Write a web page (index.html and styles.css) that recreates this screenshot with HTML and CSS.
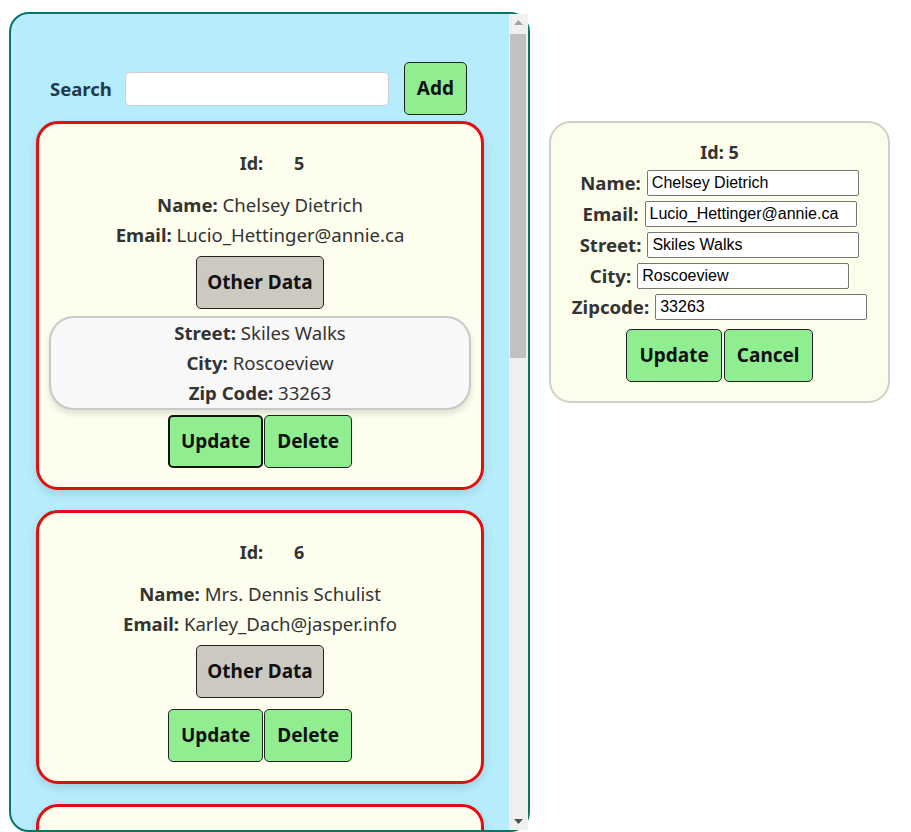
FILE: index.html
```html
<!DOCTYPE html>
<html lang="en">
<head>
    <meta charset="UTF-8">
    <meta name="viewport" content="width=device-width, initial-scale=1.0">
    <title>Users</title>
    <link rel="stylesheet" href="styles.css">
</head>
<body>

    <div class="page">
        <!-- Left: scrolling list of users -->
        <div class="list-panel">
            <div class="list-content">
                <div class="search-bar">
                    <label class="search-label" for="search">Search</label>
                    <input type="text" id="search" class="search-input">
                    <button class="btn btn-green">Add</button>
                </div>

                <div class="card">
                    <p class="card-id"><b>Id:</b><b class="id-value">5</b></p>
                    <p class="field"><b>Name:</b> Chelsey Dietrich</p>
                    <p class="field"><b>Email:</b> Lucio_Hettinger@annie.ca</p>
                    <button class="btn btn-grey">Other Data</button>
                    <div class="details">
                        <p><b>Street:</b> Skiles Walks</p>
                        <p><b>City:</b> Roscoeview</p>
                        <p><b>Zip Code:</b> 33263</p>
                    </div>
                    <div class="actions">
                        <button class="btn btn-green btn-focus">Update</button>
                        <button class="btn btn-green">Delete</button>
                    </div>
                </div>

                <div class="card">
                    <p class="card-id"><b>Id:</b><b class="id-value">6</b></p>
                    <p class="field"><b>Name:</b> Mrs. Dennis Schulist</p>
                    <p class="field"><b>Email:</b> Karley_Dach@jasper.info</p>
                    <button class="btn btn-grey">Other Data</button>
                    <div class="actions">
                        <button class="btn btn-green">Update</button>
                        <button class="btn btn-green">Delete</button>
                    </div>
                </div>

                <div class="card">
                    <p class="card-id"><b>Id:</b><b class="id-value">7</b></p>
                    <p class="field"><b>Name:</b> Kurtis Weissnat</p>
                    <p class="field"><b>Email:</b> Telly.Hoeger@billy.biz</p>
                    <button class="btn btn-grey">Other Data</button>
                    <div class="actions">
                        <button class="btn btn-green">Update</button>
                        <button class="btn btn-green">Delete</button>
                    </div>
                </div>
            </div>

            <!-- drawn scrollbar -->
            <div class="scrollbar">
                <div class="scroll-btn">
                    <svg width="9" height="5" viewBox="0 0 9 5"><polygon points="0,5 4.5,0 9,5" fill="#a3a3a3"/></svg>
                </div>
                <div class="scroll-track">
                    <div class="scroll-thumb"></div>
                </div>
                <div class="scroll-btn">
                    <svg width="9" height="5" viewBox="0 0 9 5"><polygon points="0,0 4.5,5 9,0" fill="#505050"/></svg>
                </div>
            </div>
        </div>

        <!-- Right: edit form for the selected user -->
        <div class="edit-panel">
            <p class="edit-id">Id: 5</p>
            <div class="edit-row">
                <label for="editName">Name:</label>
                <input type="text" id="editName" class="edit-input" value="Chelsey Dietrich">
            </div>
            <div class="edit-row">
                <label for="editEmail">Email:</label>
                <input type="text" id="editEmail" class="edit-input" value="Lucio_Hettinger@annie.ca">
            </div>
            <div class="edit-row">
                <label for="editStreet">Street:</label>
                <input type="text" id="editStreet" class="edit-input" value="Skiles Walks">
            </div>
            <div class="edit-row">
                <label for="editCity">City:</label>
                <input type="text" id="editCity" class="edit-input" value="Roscoeview">
            </div>
            <div class="edit-row">
                <label for="editZip">Zipcode:</label>
                <input type="text" id="editZip" class="edit-input" value="33263">
            </div>
            <div class="actions edit-actions">
                <button class="btn btn-green">Update</button>
                <button class="btn btn-green">Cancel</button>
            </div>
        </div>
    </div>

</body>
</html>
```

FILE: styles.css
```css
body {
    margin: 0;
    font-family: "Noto Sans", "Open Sans", sans-serif;
    color: #333;
    background-color: #fff;
    overflow: hidden;
}

p {
    margin: 0;
}

.page {
    display: flex;
    align-items: flex-start;
    padding: 12px 0 0 9px;
}

/* ---------- left list ---------- */

.list-panel {
    display: flex;
    width: 521px;
    height: 820px;
    box-sizing: border-box;
    border: 2px solid #0b7563;
    border-radius: 20px;
    background-color: #b6ecfc;
}

.list-content {
    flex: 1;
    overflow: hidden;
    border-radius: 18px 0 0 18px;
}

.scrollbar {
    width: 19px;
    display: flex;
    flex-direction: column;
    background-color: #f0f0f0;
}

.scroll-btn {
    height: 17px;
    display: flex;
    align-items: center;
    justify-content: center;
}

.scroll-track {
    flex: 1;
    padding-top: 3px;
}

.scroll-thumb {
    height: 324px;
    margin: 0 2px 0 1px;
    background-color: #c1c1c1;
}

.search-bar {
    display: flex;
    align-items: center;
    justify-content: center;
    padding: 48px 3px 0 0;
    margin-bottom: 6px;
}

.search-label {
    font-size: 18.5px;
    font-weight: bold;
    color: #1f3a4d;
    margin-right: 13px;
}

.search-input {
    width: 264px;
    height: 34px;
    box-sizing: border-box;
    border: 1px solid #cfcfcf;
    border-radius: 5px;
    background-color: #fff;
    margin-right: 15px;
}

.btn {
    font-family: "Noto Sans", "Open Sans", sans-serif;
    font-size: 19px;
    font-weight: bold;
    line-height: 27px;
    color: #111;
    padding: 12px;
    border: 1px solid #222;
    border-radius: 5px;
    cursor: pointer;
}

.btn-green {
    background-color: #90ee90;
}

.btn-grey {
    background-color: #ccc9c1;
    padding: 12px 10px;
}

.btn-focus {
    border: 2px solid #111;
    padding: 11px;
}

.card {
    width: 90%;
    margin: 0 auto 20px;
    box-sizing: border-box;
    border: 3px solid #e01010;
    border-radius: 22px;
    background-color: #fefeee;
    box-shadow: 0 4px 8px rgba(0, 0, 0, 0.12);
    padding: 24px 0 19px;
    display: flex;
    flex-direction: column;
    align-items: center;
    font-size: 18.6px;
}

.card-id {
    font-size: 18px;
    line-height: 30px;
    margin-bottom: 12px;
    padding-left: 24px;
}

.id-value {
    margin-left: 31px;
}

.field {
    line-height: 30px;
}

.card .btn-grey {
    margin-top: 6px;
}

.details {
    align-self: stretch;
    margin: 7px 10px -6px;
    border: 2px solid #c9c9c9;
    border-radius: 25px;
    background-color: #f8f8f8;
    box-shadow: 0 4px 6px rgba(0, 0, 0, 0.12);
    text-align: center;
}

.details p {
    line-height: 30px;
}

.actions {
    display: flex;
    justify-content: center;
    gap: 1px;
    margin-top: 11px;
}

/* ---------- right edit form ---------- */

.edit-panel {
    width: 341px;
    box-sizing: border-box;
    margin: 109px 0 0 19px;
    border: 2px solid #cfcfc6;
    border-radius: 22px;
    background-color: #fdfdec;
    padding: 16px 0 19px;
    font-size: 18.6px;
}

.edit-id {
    font-size: 18px;
    font-weight: bold;
    text-align: center;
    line-height: 27px;
    margin-bottom: 1px;
}

.edit-row {
    display: flex;
    align-items: center;
    justify-content: center;
    height: 31px;
}

.edit-row label {
    font-weight: bold;
    margin-right: 6px;
}

.edit-input {
    width: 212px;
    height: 26px;
    box-sizing: border-box;
    font-family: "Liberation Sans", Arial, sans-serif;
    font-size: 16px;
    color: #000;
    border: 1px solid #767676;
    border-radius: 2px;
    padding: 1px 4px;
    background-color: #fff;
}

.edit-actions {
    margin-top: 7px;
    gap: 2px;
}
```
